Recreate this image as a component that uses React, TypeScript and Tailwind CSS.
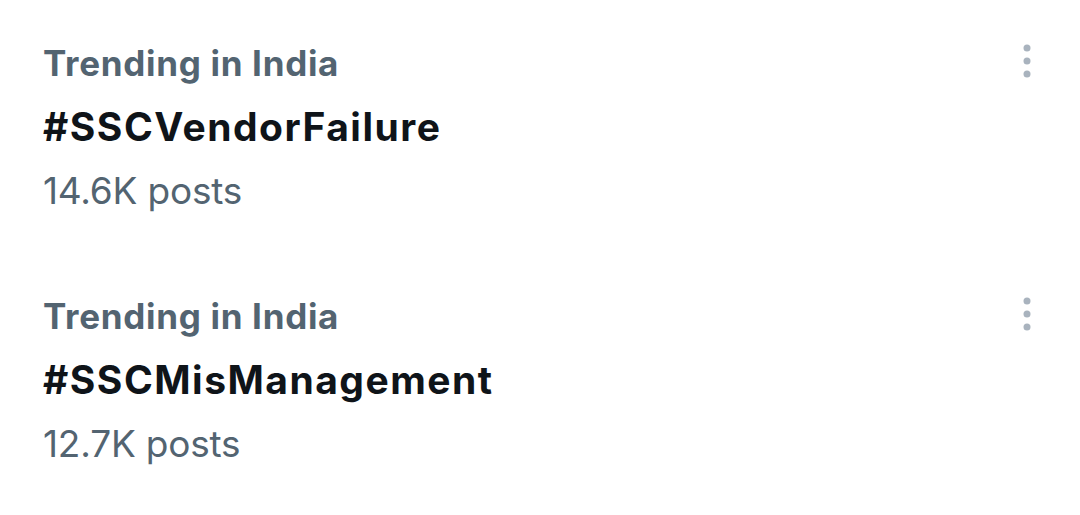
const trends = [
  { place: 'Trending in India', tag: '#SSCVendorFailure', posts: '14.6K posts' },
  { place: 'Trending in India', tag: '#SSCMisManagement', posts: '12.7K posts' },
];

function MoreIcon() {
  return (
    <svg width="8" height="34" viewBox="0 0 8 34" className="mt-[13px] shrink-0">
      <circle cx="4" cy="4" r="3.5" fill="#a9b3be" />
      <circle cx="4" cy="17" r="3.5" fill="#a9b3be" />
      <circle cx="4" cy="30" r="3.5" fill="#a9b3be" />
    </svg>
  );
}

export default function App() {
  return (
    <div className="w-[1080px] h-[515px] bg-white pt-px overflow-hidden font-['Inter',sans-serif]">
      {trends.map((t) => (
        <div key={t.tag} className="flex justify-between pl-[43px] pr-[49px] pt-[30px] pb-[30px]">
          <div className="flex flex-col">
            <span className="text-[35px] leading-[64px] font-bold tracking-[0.7px] text-[#536471]">{t.place}</span>
            <span className="text-[39px] leading-[63px] font-bold tracking-[1.5px] text-[#0f1419]">{t.tag}</span>
            <span className="text-[37px] leading-[66px] tracking-[-0.2px] text-[#536471]">{t.posts}</span>
          </div>
          <MoreIcon />
        </div>
      ))}
    </div>
  );
}
